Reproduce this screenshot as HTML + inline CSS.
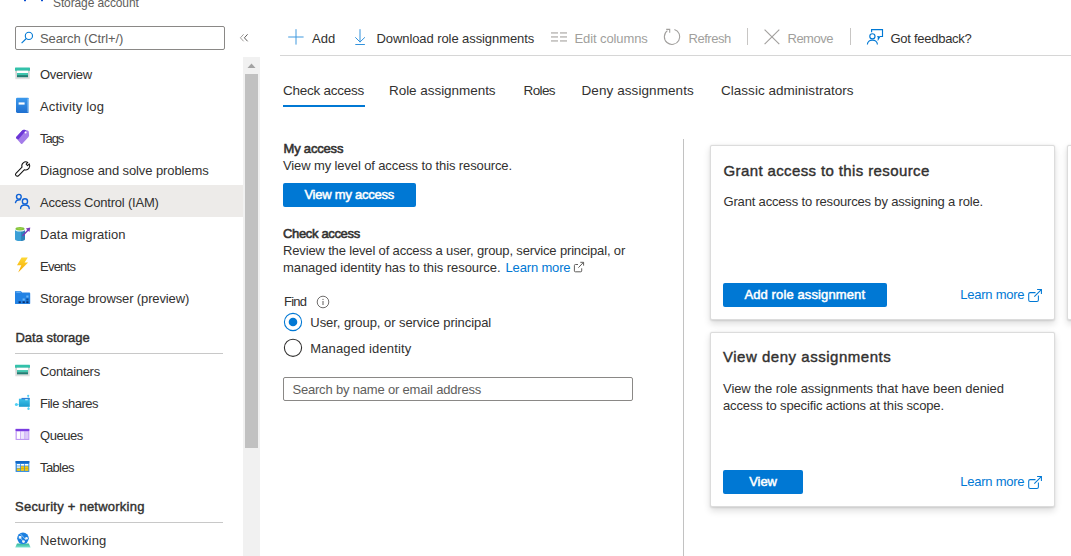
<!DOCTYPE html>
<html><head><meta charset="utf-8"><style>
html,body{margin:0;padding:0;width:1071px;height:556px;overflow:hidden;background:#fff;font-family:"Liberation Sans", sans-serif;}
.t{position:absolute;white-space:nowrap;}
.b{position:absolute;box-sizing:border-box;}
svg{position:absolute;overflow:visible;}
.card{position:absolute;box-sizing:border-box;width:345px;height:175px;background:#fff;border:1px solid #dcdcdc;border-radius:2px;box-shadow:0 3.2px 7.2px rgba(0,0,0,.13),0 0.6px 1.8px rgba(0,0,0,.11);}
</style></head><body>
<!-- sidebar -->
<div class="b" style="left:15px;top:26px;width:210px;height:24px;border:1px solid #8a8886;border-radius:2px"></div>
<div class="b" style="left:0;top:185px;width:243px;height:32px;background:#edebe9"></div>
<div class="b" style="left:15px;top:353px;width:208px;height:1px;background:#c8c8c8"></div>
<div class="b" style="left:15px;top:522px;width:208px;height:1px;background:#c8c8c8"></div>
<div class="b" style="left:243px;top:57px;width:17px;height:499px;background:#f1f1f1"></div>
<div class="b" style="left:245px;top:74px;width:13px;height:374px;background:#c1c1c1"></div>
<svg style="left:0;top:0" width="1071" height="556">
  <polygon points="247.5,68 251.5,63.5 255.5,68" fill="#a3a3a3"/>
</svg>
<!-- toolbar -->
<div class="b" style="left:280px;top:55px;width:791px;height:1px;background:#d6d6d6"></div>
<div class="b" style="left:747px;top:28px;width:1px;height:17px;background:#c8c6c4"></div>
<div class="b" style="left:850px;top:28px;width:1px;height:17px;background:#c8c6c4"></div>
<!-- tabs -->
<div class="b" style="left:283px;top:105px;width:82px;height:2px;background:#0078d4"></div>
<!-- divider -->
<div class="b" style="left:683px;top:139px;width:1px;height:417px;background:#c2c2c2"></div>
<!-- left content -->
<div class="b" style="left:283px;top:183px;width:133px;height:24px;background:#0078d4;border-radius:2px"></div>
<div class="b" style="left:283px;top:377px;width:350px;height:24px;border:1px solid #8a8886;border-radius:2px"></div>
<!-- cards -->
<div class="card" style="left:710px;top:145px"></div>
<div class="card" style="left:710px;top:332px"></div>
<div class="card" style="left:1067px;top:145px"></div>
<div class="b" style="left:723px;top:283px;width:164px;height:24px;background:#0078d4;border-radius:2px"></div>
<div class="b" style="left:723px;top:470px;width:80px;height:24px;background:#0078d4;border-radius:2px"></div>
<svg style="left:0;top:0" width="1071" height="556" viewBox="0 0 1071 556"><defs>
<linearGradient id="gBook" x1="0" y1="0" x2="0" y2="1"><stop offset="0" stop-color="#3b98ec"/><stop offset="1" stop-color="#1f70d0"/></linearGradient>
<linearGradient id="gTag" x1="0" y1="0" x2="1" y2="1"><stop offset="0" stop-color="#7a3ee2"/><stop offset="1" stop-color="#b28cef"/></linearGradient>
<linearGradient id="gBolt" x1="0" y1="0" x2="0" y2="1"><stop offset="0" stop-color="#fdd835"/><stop offset="1" stop-color="#f6a800"/></linearGradient>
<linearGradient id="gCyl" x1="0" y1="0" x2="1" y2="0"><stop offset="0" stop-color="#3a9fd6"/><stop offset=".55" stop-color="#3a9fd6"/><stop offset=".6" stop-color="#2e86bd"/><stop offset="1" stop-color="#2b7fb4"/></linearGradient>
<linearGradient id="gFold" x1="0" y1="0" x2="0" y2="1"><stop offset="0" stop-color="#2f8ae6"/><stop offset="1" stop-color="#1a6fd6"/></linearGradient>
<linearGradient id="gShare" x1="0" y1="0" x2="0" y2="1"><stop offset="0" stop-color="#3ac2ea"/><stop offset="1" stop-color="#1a9ccd"/></linearGradient>
<linearGradient id="gGround" x1="0" y1="0" x2="0" y2="1"><stop offset="0" stop-color="#2fb59a"/><stop offset="1" stop-color="#7de3cf"/></linearGradient>
<linearGradient id="gFrame" x1="0" y1="0" x2="0" y2="1"><stop offset="0" stop-color="#c8c8c8"/><stop offset="1" stop-color="#e0e0e0"/></linearGradient>
</defs><rect x="24" y="0" width="2" height="1.2" fill="#0b4fd0"/><rect x="41" y="0" width="2" height="1.2" fill="#0b4fd0"/><g fill="none" stroke="#0078d4" stroke-width="1.1"><circle cx="28.9" cy="35.9" r="3.6"/><line x1="26.3" y1="38.5" x2="21.6" y2="43.2"/></g><g fill="none" stroke-width="1"><polyline points="243.6,34.3 240.4,37.8 243.6,41.3" stroke="#a19f9d"/><polyline points="247.6,34.3 244.4,37.8 247.6,41.3" stroke="#605e5c"/></g><g transform="translate(0,0)"><rect x="15.3" y="68.5" width="14.4" height="10.7" fill="url(#gFrame)"/><rect x="15" y="67.6" width="15" height="3.1" rx="0.5" fill="#33c1aa"/><rect x="17" y="70.7" width="11" height="2.3" fill="#ffffff"/><rect x="17" y="73" width="11" height="2.1" fill="#3fc6ae"/><rect x="17" y="75.1" width="11" height="2.1" fill="#1f7e73"/></g><g transform="translate(0,297.1)"><rect x="15.3" y="68.5" width="14.4" height="10.7" fill="url(#gFrame)"/><rect x="15" y="67.6" width="15" height="3.1" rx="0.5" fill="#33c1aa"/><rect x="17" y="70.7" width="11" height="2.3" fill="#ffffff"/><rect x="17" y="73" width="11" height="2.1" fill="#3fc6ae"/><rect x="17" y="75.1" width="11" height="2.1" fill="#1f7e73"/></g><rect x="16" y="97.8" width="13" height="15.1" rx="1.3" fill="url(#gBook)"/><rect x="27.6" y="98.6" width="1.2" height="13.6" fill="#a9d3f7"/><rect x="18.6" y="102.4" width="6" height="2.2" fill="#fff"/><path d="M16.2,136.9 L22.4,130.3 Q23.2,129.6 24.2,129.8 L27.8,130.6 Q28.6,130.9 28.8,131.7 L29.1,135.3 Q29.1,136.2 28.5,136.9 L22.3,143.8 Q21.7,144.4 21.0,143.8 L16.2,138.3 Q15.7,137.6 16.2,136.9 Z" fill="#a47ce9"/><path d="M16.2,136.9 L22.4,130.3 Q23.2,129.6 24.2,129.8 L26.2,130.2 L18.4,139.6 L16.2,138.3 Q15.7,137.6 16.2,136.9 Z" fill="#6c36d6"/><circle cx="25.6" cy="132.6" r="1" fill="#fff"/><path d="M15.94,173.29 L22.02,167.21 A4.0,4.0 0 0 1 27.79,162.43 L26.12,164.10 L27.60,165.58 L29.27,163.91 A4.0,4.0 0 0 1 24.49,169.68 L18.41,175.76 A1.75,1.75 0 0 1 15.94,173.29 Z" fill="#fff" stroke="#111" stroke-width="1.05" stroke-linejoin="round"/><g fill="none" stroke="#0f62d6" stroke-width="1.4" stroke-linecap="round"><circle cx="18.85" cy="196.75" r="2.35"/><path d="M15.5,202.6 C15.9,200.6 17.6,199.6 20.3,199.7"/><circle cx="24.95" cy="201.4" r="2.6"/><path d="M20.6,208.5 C20.8,203.9 29.0,203.9 29.2,208.5"/></g><path d="M15,229.8 L15,239.2 A5,1.8 0 0 0 25,239.2 L25,229.8 Z" fill="url(#gCyl)"/><ellipse cx="20" cy="229.6" rx="5" ry="2" fill="#e6f3fa"/><ellipse cx="20" cy="228.7" rx="4.5" ry="1.7" fill="#84c43c"/><ellipse cx="20" cy="228.7" rx="2.6" ry="0.8" fill="#9fd246"/><line x1="22.9" y1="235.4" x2="28.4" y2="229.8" stroke="#7a3bb8" stroke-width="1.4" stroke-linecap="round"/><polygon points="30.3,227.6 25.8,228.5 29.4,232.1" fill="#7a3bb8"/><polygon points="21.6,257.5 27.8,257.5 24.6,262.6 28.1,262.6 18.2,272.6 21.3,265.2 17.0,265.2" fill="url(#gBolt)"/><path d="M15,291.6 Q15,290.9 15.7,290.9 L20.8,290.9 L22.2,292.4 L29.4,292.4 Q30.1,292.4 30.1,293.1 L30.1,303.2 Q30.1,303.8 29.4,303.8 L15.7,303.8 Q15,303.8 15,303.1 Z" fill="url(#gFold)"/><rect x="15" y="293.4" width="15.1" height="10.4" fill="#2182e4"/><rect x="16.3" y="291.6" width="4.3" height="1" fill="#7cc0f8"/><rect x="26.3" y="295.5" width="2.2" height="2" fill="#6db6f7"/><rect x="22.6" y="298.5" width="2.2" height="2" fill="#6db6f7"/><rect x="26.3" y="298.5" width="2.2" height="2" fill="#0a4e9c"/><rect x="18.6" y="301.3" width="2.2" height="1.8" fill="#0a2f6e"/><rect x="22.6" y="301.3" width="2.2" height="1.8" fill="#0a2f6e"/><rect x="26.3" y="301.3" width="2.2" height="1.8" fill="#0a2f6e"/><g stroke="#50d0f5" stroke-width="0.6"><line x1="16.4" y1="404.5" x2="18.9" y2="404.5"/><line x1="28.2" y1="395.8" x2="28.2" y2="398.7"/><line x1="28.5" y1="406.8" x2="28.5" y2="408.8"/></g><rect x="18.9" y="398.7" width="10.9" height="8.1" fill="url(#gShare)"/><rect x="21.5" y="397.9" width="8.3" height="1.5" fill="#2f7fd6"/><rect x="25.2" y="399.3" width="2.5" height="0.9" fill="#fff"/><circle cx="16.4" cy="404.5" r="1.5" fill="#50d0f5"/><circle cx="28.2" cy="395.8" r="1.1" fill="#50d0f5"/><circle cx="28.5" cy="408.8" r="1.2" fill="#50d0f5"/><rect x="15.6" y="428.9" width="13.7" height="11" fill="#b88cf2"/><rect x="15.6" y="428.9" width="13.7" height="2.1" fill="#7a3ce0"/><rect x="16.7" y="431.5" width="3.6" height="7.4" fill="#fff"/><rect x="20.9" y="431.5" width="3.6" height="7.4" fill="#efe6fd"/><rect x="25.1" y="431.5" width="3.4" height="7.4" fill="#dcc8f9"/><rect x="15.6" y="461" width="13.7" height="10.9" fill="#2a86e0"/><rect x="15.6" y="461" width="13.7" height="2.1" fill="#1468c4"/><g fill="#fff"><rect x="16.8" y="464" width="3.4" height="1.6"/><rect x="20.9" y="464" width="3.4" height="1.6"/><rect x="25" y="464" width="3.4" height="1.6"/></g><g fill="#cfe6fb"><rect x="16.8" y="466.2" width="3.4" height="1.8"/></g><g fill="#f2c811"><rect x="16.8" y="468.4" width="3.4" height="2.5"/><rect x="20.9" y="466.2" width="3.4" height="4.7"/><rect x="25" y="466.2" width="3.4" height="4.7"/></g><g fill="#c9a400"><rect x="20.9" y="468" width="3.4" height="0.5"/><rect x="25" y="468" width="3.4" height="0.5"/></g><path d="M17,543.5 L28.8,543.5 L30.6,547.5 L15.2,547.5 Z" fill="url(#gGround)"/><circle cx="23" cy="538.3" r="5.8" fill="#1b7fe0"/><g stroke="#bfe0fb" stroke-width="0.7"><line x1="20.5" y1="534" x2="26" y2="540"/><line x1="19.5" y1="537" x2="23.5" y2="541.5"/></g><g fill="#f2f5f8"><rect x="18.8" y="536" width="2.6" height="2.6"/><circle cx="26.5" cy="538.2" r="1.3"/><circle cx="23.5" cy="541.6" r="1.4"/></g><g stroke="#0078d4" stroke-width="1" fill="none" opacity="0.75"><line x1="288.2" y1="37" x2="303.6" y2="37"/><line x1="296" y1="29.2" x2="296" y2="44.6"/></g><g stroke="#0078d4" stroke-width="1" fill="none" opacity="0.8"><line x1="360" y1="29.2" x2="360" y2="42.3"/><polyline points="355.3,37.3 360,42 364.9,37.3"/><line x1="355.3" y1="44.5" x2="364.9" y2="44.5"/></g><g fill="#c8c6c4"><rect x="551" y="32" width="7" height="1.8"/><rect x="551" y="36" width="7" height="1.8"/><rect x="551" y="40" width="7" height="1.8"/><rect x="560" y="32" width="7" height="1.8"/><rect x="560" y="36" width="7" height="1.8"/><rect x="560" y="40" width="7" height="1.8"/></g><g stroke="#a19f9d" stroke-width="1.1" fill="none"><path d="M674.4,29.4 A7.7,7.7 0 1 1 667.4,30.6"/><polyline points="666.2,29.4 669.7,29.4 669.7,32.8"/></g><g stroke="#a19f9d" stroke-width="1.1"><line x1="764.6" y1="29.7" x2="779.3" y2="44.2"/><line x1="779.3" y1="29.7" x2="764.6" y2="44.2"/></g><g stroke="#0078d4" stroke-width="1.15" fill="none" stroke-linejoin="miter"><polyline points="871.6,32.2 871.6,29.6 882.5,29.6 882.5,36.5 879.9,36.5 878.3,39.2 878.3,36.5 877.3,36.5"/><circle cx="872.4" cy="36.3" r="2.6"/><path d="M867.4,44.6 C867.4,38.7 877.4,38.7 877.4,44.6"/></g><circle cx="323" cy="302" r="5.8" fill="none" stroke="#605e5c" stroke-width="0.9"/><rect x="322.5" y="301" width="1" height="4" fill="#605e5c"/><rect x="322.5" y="298.9" width="1" height="1.1" fill="#605e5c"/><circle cx="293" cy="322" r="8.6" fill="none" stroke="#0078d4" stroke-width="1.1"/><circle cx="293" cy="322" r="4.3" fill="#0078d4"/><circle cx="293" cy="347.8" r="8.6" fill="none" stroke="#323130" stroke-width="1.1"/><g stroke="#605e5c" stroke-width="1" fill="none"><path d="M578,264.5 L575.4,264.5 Q574.4,264.5 574.4,265.5 L574.4,270.9 Q574.4,271.8 575.4,271.8 L580.8,271.8 Q581.7,271.8 581.7,270.9 L581.7,268.3"/><line x1="578.4" y1="267.7" x2="583.5" y2="262.3"/><polyline points="580.3,262.3 583.6,262.3 583.6,265.6"/></g><g transform="translate(0,0)" stroke="#0078d4" stroke-width="1.05" fill="none"><path d="M1035.5,292.6 L1030.2,292.6 Q1028.7,292.6 1028.7,294.1 L1028.7,299.9 Q1028.7,301.4 1030.2,301.4 L1036.9,301.4 Q1038.4,301.4 1038.4,299.9 L1038.4,295.6"/><line x1="1034.3" y1="296.7" x2="1041.3" y2="289.6"/><polyline points="1037.1,289.4 1041.4,289.4 1041.4,293.9"/></g><g transform="translate(0,187)" stroke="#0078d4" stroke-width="1.05" fill="none"><path d="M1035.5,292.6 L1030.2,292.6 Q1028.7,292.6 1028.7,294.1 L1028.7,299.9 Q1028.7,301.4 1030.2,301.4 L1036.9,301.4 Q1038.4,301.4 1038.4,299.9 L1038.4,295.6"/><line x1="1034.3" y1="296.7" x2="1041.3" y2="289.6"/><polyline points="1037.1,289.4 1041.4,289.4 1041.4,293.9"/></g></svg>
<div class="t" style="left:53px;top:-6px;font-size:12px;line-height:18px;color:#605e5c;letter-spacing:-0.114px;">Storage account</div>
<div class="t" style="left:40px;top:28.5px;font-size:13px;line-height:19px;color:#605e5c;letter-spacing:-0.115px;">Search (Ctrl+/)</div>
<div class="t" style="left:40px;top:65px;font-size:13px;line-height:19px;color:#323130;letter-spacing:-0.293px;">Overview</div>
<div class="t" style="left:40px;top:97px;font-size:13px;line-height:19px;color:#323130;letter-spacing:0.161px;">Activity log</div>
<div class="t" style="left:40px;top:129px;font-size:13px;line-height:19px;color:#323130;letter-spacing:-1.033px;">Tags</div>
<div class="t" style="left:40px;top:161px;font-size:13px;line-height:19px;color:#323130;letter-spacing:-0.100px;">Diagnose and solve problems</div>
<div class="t" style="left:40px;top:193px;font-size:13px;line-height:19px;color:#323130;letter-spacing:-0.205px;">Access Control (IAM)</div>
<div class="t" style="left:40px;top:225px;font-size:13px;line-height:19px;color:#323130;letter-spacing:0.077px;">Data migration</div>
<div class="t" style="left:40px;top:257px;font-size:13px;line-height:19px;color:#323130;letter-spacing:-0.772px;">Events</div>
<div class="t" style="left:40px;top:289px;font-size:13px;line-height:19px;color:#323130;letter-spacing:-0.133px;">Storage browser (preview)</div>
<div class="t" style="left:40px;top:361.5px;font-size:13px;line-height:19px;color:#323130;letter-spacing:-0.302px;">Containers</div>
<div class="t" style="left:40px;top:393.5px;font-size:13px;line-height:19px;color:#323130;letter-spacing:-0.500px;">File shares</div>
<div class="t" style="left:40px;top:425.5px;font-size:13px;line-height:19px;color:#323130;letter-spacing:-0.436px;">Queues</div>
<div class="t" style="left:40px;top:457.5px;font-size:13px;line-height:19px;color:#323130;letter-spacing:-0.612px;">Tables</div>
<div class="t" style="left:40px;top:531px;font-size:13px;line-height:19px;color:#323130;letter-spacing:0.134px;">Networking</div>
<div class="t" style="left:15.5px;top:328px;font-size:13px;line-height:19px;color:#323130;-webkit-text-stroke:0.4px #323130;letter-spacing:-0.021px;">Data storage</div>
<div class="t" style="left:15px;top:497px;font-size:13px;line-height:19px;color:#323130;-webkit-text-stroke:0.4px #323130;letter-spacing:0.240px;">Security + networking</div>
<div class="t" style="left:312px;top:29px;font-size:13px;line-height:19px;color:#323130;letter-spacing:0.040px;">Add</div>
<div class="t" style="left:376.5px;top:29px;font-size:13px;line-height:19px;color:#323130;letter-spacing:-0.082px;">Download role assignments</div>
<div class="t" style="left:574.5px;top:29px;font-size:13px;line-height:19px;color:#a19f9d;letter-spacing:-0.098px;">Edit columns</div>
<div class="t" style="left:688.5px;top:29px;font-size:13px;line-height:19px;color:#a19f9d;letter-spacing:-0.461px;">Refresh</div>
<div class="t" style="left:787.5px;top:29px;font-size:13px;line-height:19px;color:#a19f9d;letter-spacing:-0.498px;">Remove</div>
<div class="t" style="left:890.5px;top:29px;font-size:13px;line-height:19px;color:#323130;letter-spacing:-0.271px;">Got feedback?</div>
<div class="t" style="left:283px;top:81px;font-size:13.5px;line-height:20px;color:#323130;letter-spacing:-0.247px;">Check access</div>
<div class="t" style="left:389px;top:81px;font-size:13.5px;line-height:20px;color:#323130;letter-spacing:-0.048px;">Role assignments</div>
<div class="t" style="left:523.5px;top:81px;font-size:13.5px;line-height:20px;color:#323130;letter-spacing:-0.600px;">Roles</div>
<div class="t" style="left:581.5px;top:81px;font-size:13.5px;line-height:20px;color:#323130;letter-spacing:0.081px;">Deny assignments</div>
<div class="t" style="left:721px;top:81px;font-size:13.5px;line-height:20px;color:#323130;letter-spacing:0.024px;">Classic administrators</div>
<div class="t" style="left:283.5px;top:139px;font-size:13px;line-height:19px;color:#323130;-webkit-text-stroke:0.55px #323130;letter-spacing:-0.190px;">My access</div>
<div class="t" style="left:283px;top:155.5px;font-size:13px;line-height:19px;color:#323130;letter-spacing:-0.120px;">View my level of access to this resource.</div>
<div class="t" style="left:283px;top:223.5px;font-size:13px;line-height:19px;color:#323130;-webkit-text-stroke:0.55px #323130;letter-spacing:-0.343px;">Check access</div>
<div class="t" style="left:283px;top:240.7px;font-size:13px;line-height:19px;color:#323130;letter-spacing:-0.156px;">Review the level of access a user, group, service principal, or</div>
<div class="t" style="left:283px;top:257.6px;font-size:13px;line-height:19px;color:#323130;letter-spacing:-0.058px;">managed identity has to this resource.</div>
<div class="t" style="left:505.5px;top:257.6px;font-size:13px;line-height:19px;color:#0078d4;letter-spacing:-0.157px;">Learn more</div>
<div class="t" style="left:284px;top:292px;font-size:13px;line-height:19px;color:#323130;letter-spacing:-0.767px;">Find</div>
<div class="t" style="left:310.3px;top:312.7px;font-size:13px;line-height:19px;color:#323130;letter-spacing:-0.058px;">User, group, or service principal</div>
<div class="t" style="left:310.3px;top:338.6px;font-size:13px;line-height:19px;color:#323130;letter-spacing:0.123px;">Managed identity</div>
<div class="t" style="left:292.4px;top:379.6px;font-size:13px;line-height:19px;color:#605e5c;letter-spacing:-0.182px;">Search by name or email address</div>
<div class="t" style="left:723.5px;top:159.5px;font-size:15px;line-height:21px;color:#323130;-webkit-text-stroke:0.4px #323130;letter-spacing:0.382px;">Grant access to this resource</div>
<div class="t" style="left:723.5px;top:191.6px;font-size:13px;line-height:19px;color:#323130;letter-spacing:-0.173px;">Grant access to resources by assigning a role.</div>
<div class="t" style="left:960.3px;top:284.7px;font-size:13px;line-height:19px;color:#0078d4;letter-spacing:-0.242px;">Learn more</div>
<div class="t" style="left:723px;top:346.3px;font-size:15px;line-height:21px;color:#323130;-webkit-text-stroke:0.4px #323130;letter-spacing:0.520px;">View deny assignments</div>
<div class="t" style="left:723px;top:379px;font-size:13px;line-height:19px;color:#323130;letter-spacing:-0.060px;">View the role assignments that have been denied</div>
<div class="t" style="left:723px;top:395.5px;font-size:13px;line-height:19px;color:#323130;letter-spacing:-0.146px;">access to specific actions at this scope.</div>
<div class="t" style="left:960.3px;top:471.6px;font-size:13px;line-height:19px;color:#0078d4;letter-spacing:-0.242px;">Learn more</div>
<div class="t" style="left:304.4px;top:184.7px;font-size:13px;line-height:19px;color:#fff;-webkit-text-stroke:0.5px #fff;letter-spacing:-0.232px;">View my access</div>
<div class="t" style="left:744.4px;top:284.5px;font-size:13px;line-height:19px;color:#fff;-webkit-text-stroke:0.5px #fff;letter-spacing:0.116px;">Add role assignment</div>
<div class="t" style="left:749.2px;top:471.7px;font-size:13px;line-height:19px;color:#fff;-webkit-text-stroke:0.5px #fff;letter-spacing:-0.055px;">View</div>
</body></html>
